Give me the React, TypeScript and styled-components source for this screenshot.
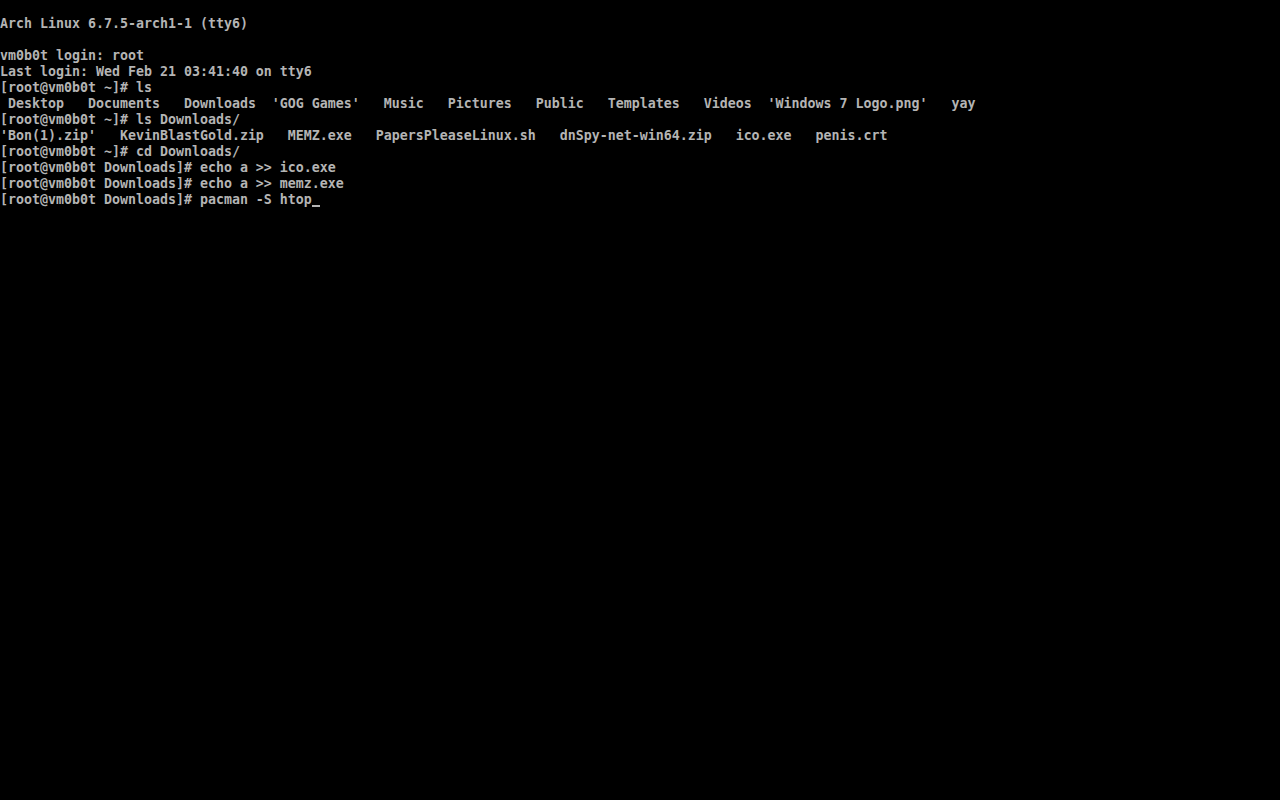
import React from 'react'
import styled, { createGlobalStyle } from 'styled-components'

const GlobalStyle = createGlobalStyle`
  html, body {
    margin: 0;
    padding: 0;
    background: #000;
  }
`

const lines: string[] = [
  '',
  'Arch Linux 6.7.5-arch1-1 (tty6)',
  '',
  'vm0b0t login: root',
  'Last login: Wed Feb 21 03:41:40 on tty6',
  '[root@vm0b0t ~]# ls',
  " Desktop   Documents   Downloads  'GOG Games'   Music   Pictures   Public   Templates   Videos  'Windows 7 Logo.png'   yay",
  '[root@vm0b0t ~]# ls Downloads/',
  "'Bon(1).zip'   KevinBlastGold.zip   MEMZ.exe   PapersPleaseLinux.sh   dnSpy-net-win64.zip   ico.exe   penis.crt",
  '[root@vm0b0t ~]# cd Downloads/',
  '[root@vm0b0t Downloads]# echo a >> ico.exe',
  '[root@vm0b0t Downloads]# echo a >> memz.exe',
]

const prompt = '[root@vm0b0t Downloads]# pacman -S htop'

export default function App() {
  return (
    <>
      <GlobalStyle />
      <Screen>
        {lines.map((text, i) => (
          <Line key={i}>{text}</Line>
        ))}
        <Line>
          {prompt}
          <Cursor />
        </Line>
      </Screen>
    </>
  )
}

const Screen = styled.div`
  width: 1280px;
  height: 800px;
  overflow: hidden;
  background: #000;
  color: #b4b4b4;
  font-family: 'DejaVu Sans Mono', 'Liberation Mono', monospace;
  font-size: 13.29px;
  font-weight: bold;
  line-height: 16px;
`

const Line = styled.div`
  height: 16px;
  white-space: pre;
`

const Cursor = styled.span`
  display: inline-block;
  width: 8px;
  height: 16px;
  vertical-align: top;
  background: linear-gradient(
    transparent 13px,
    #b4b4b4 13px,
    #b4b4b4 15px,
    transparent 15px
  );
`
